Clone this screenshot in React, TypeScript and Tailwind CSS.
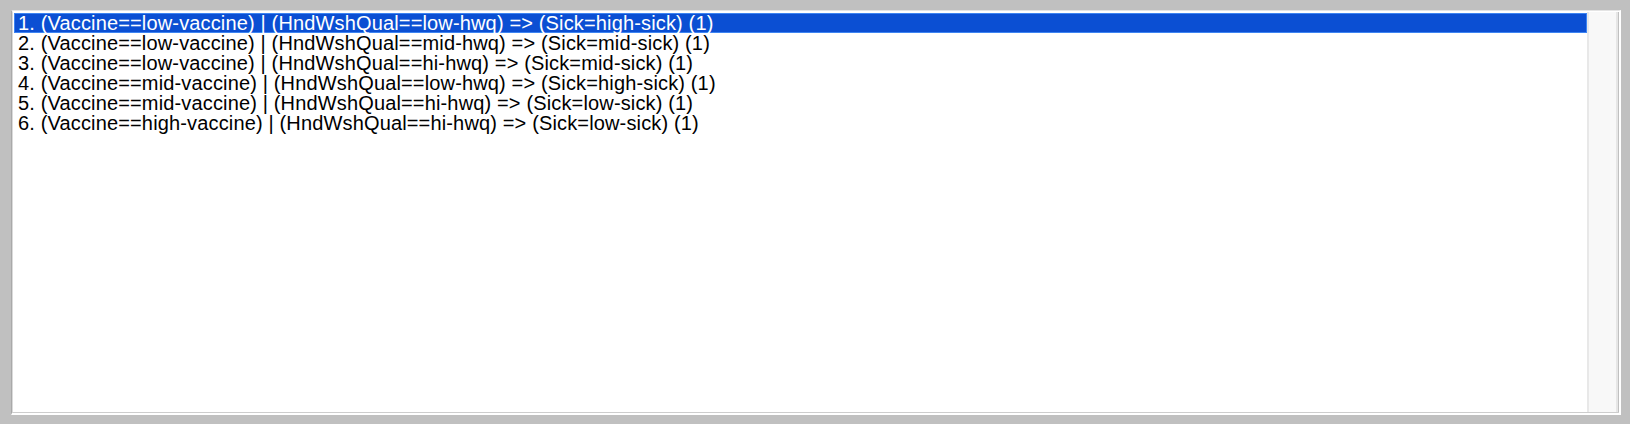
const rules = [
  "1. (Vaccine==low-vaccine) | (HndWshQual==low-hwq) => (Sick=high-sick) (1)",
  "2. (Vaccine==low-vaccine) | (HndWshQual==mid-hwq) => (Sick=mid-sick) (1)",
  "3. (Vaccine==low-vaccine) | (HndWshQual==hi-hwq) => (Sick=mid-sick) (1)",
  "4. (Vaccine==mid-vaccine) | (HndWshQual==low-hwq) => (Sick=high-sick) (1)",
  "5. (Vaccine==mid-vaccine) | (HndWshQual==hi-hwq) => (Sick=low-sick) (1)",
  "6. (Vaccine==high-vaccine) | (HndWshQual==hi-hwq) => (Sick=low-sick) (1)",
]

export default function App() {
  return (
    <div className="w-[1630px] h-[424px] bg-[#c0c0c0] pt-[10px] pl-[11px] overflow-hidden">
      {/* List box */}
      <div className="w-[1610px] h-[405px] flex flex-col border-t border-l border-r-2 border-b-2 border-t-[#e4e4e4] border-l-[#a9a9a9] border-r-white border-b-white">
        <div className="flex flex-1 min-h-0 border-t border-l border-b border-t-white border-l-[#dadada] border-b-[#cdcdcd]">
          <ul
            className="flex-1 bg-white pt-[1px] pl-[1px]"
            style={{ fontFamily: '"Liberation Sans", Arial, sans-serif' }}
          >
            {rules.map((rule, i) => (
              <li
                key={i}
                className={
                  i === 0
                    ? "h-[20px] leading-[18px] pl-[3px] text-[20px] tracking-[0.15px] text-white bg-[#0b4fd3] border border-[#3d84f2] whitespace-nowrap"
                    : "h-[20px] leading-[20px] pl-[4px] text-[20px] tracking-[0.15px] text-black whitespace-nowrap"
                }
              >
                {rule}
              </li>
            ))}
          </ul>
          {/* Scrollbar track */}
          <div className="w-[31px] bg-[#f8f8f8] border-l-2 border-r-2 border-l-[#e8e8e8] border-r-[#e6e6e6] mr-[1px]" />
        </div>
      </div>
    </div>
  )
}
